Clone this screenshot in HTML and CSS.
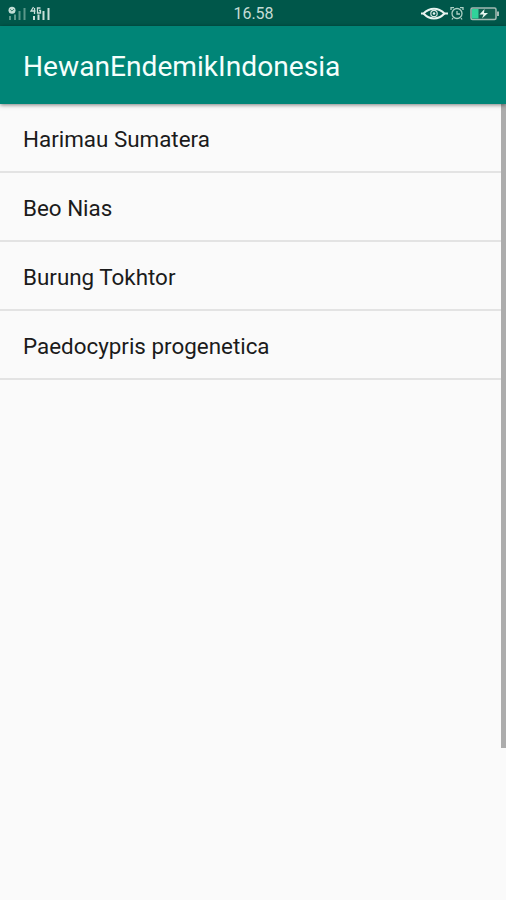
FILE: index.html
```html
<!DOCTYPE html>
<html lang="id">
<head>
<meta charset="utf-8">
<title>HewanEndemikIndonesia</title>
<link rel="stylesheet" href="styles.css">
</head>
<body>
<div class="status">
  <svg class="signals" width="44" height="16" viewBox="0 0 44 16">
    <g fill="#5b988a"><rect x="2" y="10" width="2" height="4"/><rect x="7" y="8.500" width="2" height="5.500"/><rect x="11.500" y="5" width="2" height="9"/><rect x="16.500" y="2" width="2" height="12"/></g>
    <circle cx="5" cy="4.200" r="3.500" fill="#c4dfd7"/><path d="M3.200 3.300l1.800 1.800 2-2" fill="none" stroke="#397c6c"/>
    <g fill="#c9dfd9"><rect x="26" y="10" width="2" height="4"/><rect x="30.500" y="8.500" width="2" height="5.500"/><rect x="35.500" y="5" width="2" height="9"/><rect x="40.500" y="2" width="2" height="12"/></g>
    <path d="M26.500 1l-2.500 4h4.500M27.500 2v6M33.500 2h-3v5h3V4.500H32" fill="none" stroke="#c9dfd9" stroke-width="1.300"/>
  </svg>
  <span class="time">16.58</span>
  <div class="icons">
    <svg width="28" height="16" viewBox="0 0 28 16">
      <path d="M0 7.500h2.500C6 4 9 2.700 13 2.700s7 1.300 10.500 4.800H27" fill="none" stroke="#e7f3ef" stroke-width="2"/>
      <path d="M2.500 7.500c3.500 3.700 6.500 4.900 10.500 4.900s7-1.200 10.500-4.900" fill="none" stroke="#e7f3ef" stroke-width="2"/>
      <circle cx="13" cy="7.500" r="3.200" fill="none" stroke="#d8e8e2" stroke-width="1.200"/><circle cx="13" cy="7.500" r="1.300" fill="#e7f3ef"/>
    </svg>
    <svg class="alarm" width="14" height="16" viewBox="0 0 14 16" fill="none" stroke="#add0c5" stroke-width="1.300">
      <circle cx="7" cy="7.500" r="5"/><path d="M1 4V1.700h3M10 1.700h3V4M7 5v3h3M3 12l-1 1.500M11 12l1 1.500"/>
    </svg>
    <svg class="battery" width="30" height="16" viewBox="0 0 30 16">
      <rect x="1" y="2" width="25" height="11.500" rx="1.500" fill="#125f50" stroke="#a4bbb4" stroke-width="1.500"/>
      <rect x="2" y="3" width="6.500" height="9.500" fill="#30d39a"/><path d="M27 5.500h2v4.500h-2z" fill="#a4bbb4"/>
      <path d="M14.500 3l-5 5.500h4l-1.500 4 6-5.500h-4z" fill="#e7f5ef"/>
    </svg>
  </div>
</div>
<header class="appbar"><h1>HewanEndemikIndonesia</h1></header>
<main class="content">
  <ul class="list">
    <li>Harimau Sumatera</li>
    <li>Beo Nias</li>
    <li>Burung Tokhtor</li>
    <li>Paedocypris progenetica</li>
  </ul>
  <div class="scrollbar"></div>
</main>
</body>
</html>
```
FILE: styles.css
```css
* { box-sizing: border-box; }
body { margin: 0; height: 900px; overflow: hidden; display: flex; flex-direction: column; background: #fafafa; font-family: Roboto, sans-serif; }
.status { height: 26px; flex: none; display: grid; grid-template-columns: 1fr auto 1fr; align-items: center; padding: 0 6px 0 7px; background: #00574a; }
.signals, .icons svg { display: block; }
.time { color: #c6ddd6; font-size: 16px; line-height: 26px; padding-top: 1px; }
.icons { display: flex; justify-content: flex-end; margin-left: -2px; }
.alarm { margin-left: 1px; }
.battery { margin-left: 6px; }
.appbar { height: 78px; flex: none; display: flex; align-items: center; padding: 4px 23px 0; background: #008577; box-shadow: 0 1px 4px rgba(0, 0, 0, .5); z-index: 1; }
h1 { margin: 0; color: #f5fffc; font-size: 28.15px; font-weight: 400; line-height: 34px; white-space: nowrap; }
.content { flex: 1; display: flex; align-items: flex-start; }
.list { flex: 1; margin: 0; padding: 0; list-style: none; }
.list li { height: 69px; padding: 2px 23px 0; border-bottom: 2px solid #e3e3e3; font-size: 22.4px; line-height: 67px; color: #1b1b1b; }
.scrollbar { width: 5px; height: 644px; margin-left: -5px; background: #acacac; }
```
